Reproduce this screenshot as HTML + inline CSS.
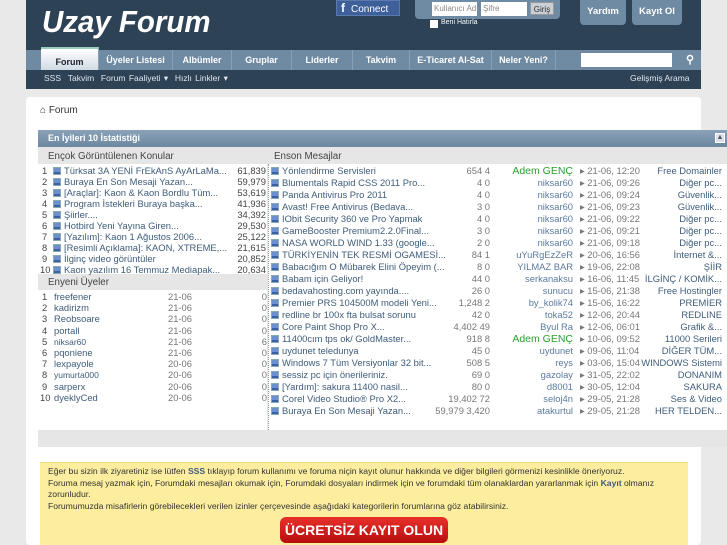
<!DOCTYPE html>
<html><head><meta charset="utf-8">
<style>
*{margin:0;padding:0;box-sizing:border-box}
body{width:727px;height:545px;overflow:hidden;background:#e9e9e9;font-family:"Liberation Sans",sans-serif;font-size:10px;color:#3e5c7a;position:relative}
.a{position:absolute;white-space:nowrap}
#hdr{position:absolute;left:26px;top:-5px;width:675px;height:94px;background:#2e4256;border-radius:4px}
.logo{position:absolute;left:42px;top:4px;font-size:31px;font-style:italic;font-weight:bold;color:#fff;transform:scaleX(0.95);transform-origin:left}
.tab{position:absolute;top:50px;height:20px;background:#6f8aa3;color:#fff;font-weight:bold;font-size:9px;text-align:center;line-height:20px;border-right:1px solid #8aa0b4}
.ic{display:inline-block;width:8px;height:8px;background:#6c8fd0;border:1px solid #8aa;vertical-align:-1px;margin-right:3px;box-shadow:inset 0 -2px #3b5fa8}
.m{position:relative;height:12px;line-height:12px;font-size:9.4px;white-space:nowrap}
.m span{position:absolute}
</style></head><body>
<div id="hdr"></div>
<div class="logo">Uzay Forum</div>
<div class="a" style="left:336px;top:0;width:64px;height:16px;background:#3d5f9a;border:1px solid #5a7ab0;color:#fff;font-size:10px;line-height:14px"><span style="font-weight:bold;font-size:12px;margin:0 6px 0 4px">f</span>Connect</div>
<div class="a" style="left:415px;top:-4px;width:145px;height:23px;background:#6f8aa3;border-radius:4px"></div>
<div class="a" style="left:432px;top:2px;width:45px;height:14px;background:#fff;color:#888;font-size:8px;line-height:14px;padding-left:2px">Kullanıcı Adı</div>
<div class="a" style="left:481px;top:2px;width:46px;height:14px;background:#fff;color:#888;font-size:8px;line-height:14px;padding-left:2px">Şifre</div>
<div class="a" style="left:530px;top:2px;width:24px;height:13px;background:#c9cfd4;color:#333;font-size:8px;line-height:13px;text-align:center;border:1px solid #999">Giriş</div>
<div class="a" style="left:430px;top:20px;width:8px;height:8px;background:#fff"></div>
<div class="a" style="left:441px;top:19px;color:#fff;font-size:7px">Beni Hatırla</div>
<div class="a" style="left:580px;top:-4px;width:46px;height:29px;background:#6f8aa3;border-radius:4px;color:#fff;font-weight:bold;font-size:9.5px;text-align:center;line-height:32px">Yardım</div>
<div class="a" style="left:632px;top:-4px;width:50px;height:29px;background:#6f8aa3;border-radius:4px;color:#fff;font-weight:bold;font-size:9.5px;text-align:center;line-height:32px">Kayıt Ol</div>
<div class="a" style="left:26px;top:50px;width:675px;height:20px;background:#6f8aa3"></div>
<div class="tab" style="left:41px;top:47px;height:23px;width:58px;background:linear-gradient(#fff,#d0dae3);color:#223;line-height:26px;border-top:2px solid #9cb">Forum</div>
<div class="tab" style="left:99px;width:74px">Üyeler Listesi</div>
<div class="tab" style="left:173px;width:59px">Albümler</div>
<div class="tab" style="left:232px;width:60px">Gruplar</div>
<div class="tab" style="left:292px;width:61px">Liderler</div>
<div class="tab" style="left:353px;width:57px">Takvim</div>
<div class="tab" style="left:410px;width:82px">E-Ticaret Al-Sat</div>
<div class="tab" style="left:492px;width:64px">Neler Yeni?</div>
<div class="a" style="left:581px;top:53px;width:91px;height:14px;background:#fff"></div>
<div class="a" style="left:686px;top:53px;color:#fff;font-weight:bold;font-size:11px">&#9906;</div>
<div class="a" style="left:26px;top:70px;width:675px;height:19px;background:#2e4256"></div>
<div class="a" style="left:44px;top:73px;color:#dfe6ee;font-size:8.5px;word-spacing:1px">SSS &nbsp;Takvim &nbsp;Forum Faaliyeti ▾ &nbsp;Hızlı Linkler ▾</div>
<div class="a" style="left:630px;top:73px;color:#dfe6ee;font-size:8.5px">Gelişmiş Arama</div>
<div class="a" style="left:26px;top:97px;width:675px;height:448px;background:#fff;border-radius:4px"></div>
<div class="a" style="left:40px;top:105px;color:#333;font-size:10px">&#8962; Forum</div>
<div class="a" style="left:38px;top:130px;width:689px;height:17px;background:linear-gradient(#8aa2b8,#6c879f);color:#fff;font-weight:bold;font-size:9px;line-height:17px;padding-left:10px">En İyileri 10 İstatistiği</div>
<div class="a" style="left:715px;top:133px;width:10px;height:10px;background:#dde;border:1px solid #fff;font-size:7px;line-height:8px;text-align:center;color:#456">▲</div>
<div class="a" style="left:38px;top:147px;width:689px;height:300px;background:#e6e6e6"></div>
<div class="a" style="left:38px;top:164px;width:229px;height:110px;background:#fff"></div>
<div class="a" style="left:38px;top:290px;width:229px;height:140px;background:#fff"></div>
<div class="a" style="left:268px;top:164px;width:459px;height:266px;background:#fff;border-left:1px dotted #999"></div>
<div class="a" style="left:48px;top:151px;color:#444;font-size:9.8px">Ençok Görüntülenen Konular</div>
<div class="a" style="left:274px;top:151px;color:#444;font-size:9.8px">Enson Mesajlar</div>
<div class="a" style="left:48px;top:277px;color:#444;font-size:9.8px">Enyeni Üyeler</div>

<div style="position:absolute;left:38px;top:165px;width:229px">
<div class="m" style="height:11px;line-height:11px"><span style="left:4px;color:#444">1</span><span style="left:15px"><i class="ic"></i>Türksat 3A YENİ FrEkAnS AyArLaMa...</span><span style="right:1px;color:#444;background:#fff">61,839</span></div>
<div class="m" style="height:11px;line-height:11px"><span style="left:4px;color:#444">2</span><span style="left:15px"><i class="ic"></i>Buraya En Son Mesaji Yazan...</span><span style="right:1px;color:#444">59,979</span></div>
<div class="m" style="height:11px;line-height:11px"><span style="left:4px;color:#444">3</span><span style="left:15px"><i class="ic"></i>[Araçlar]: Kaon &amp; Kaon Bordlu Tüm...</span><span style="right:1px;color:#444">53,619</span></div>
<div class="m" style="height:11px;line-height:11px"><span style="left:4px;color:#444">4</span><span style="left:15px"><i class="ic"></i>Program İstekleri Buraya başka...</span><span style="right:1px;color:#444">41,936</span></div>
<div class="m" style="height:11px;line-height:11px"><span style="left:4px;color:#444">5</span><span style="left:15px"><i class="ic"></i>Şiirler....</span><span style="right:1px;color:#444">34,392</span></div>
<div class="m" style="height:11px;line-height:11px"><span style="left:4px;color:#444">6</span><span style="left:15px"><i class="ic"></i>Hotbird Yeni Yayına Giren...</span><span style="right:1px;color:#444">29,530</span></div>
<div class="m" style="height:11px;line-height:11px"><span style="left:4px;color:#444">7</span><span style="left:15px"><i class="ic"></i>[Yazılım]: Kaon 1 Ağustos 2006...</span><span style="right:1px;color:#444">25,122</span></div>
<div class="m" style="height:11px;line-height:11px"><span style="left:4px;color:#444">8</span><span style="left:15px"><i class="ic"></i>[Resimli Açıklama]: KAON, XTREME,...</span><span style="right:1px;color:#444;background:#fff">21,615</span></div>
<div class="m" style="height:11px;line-height:11px"><span style="left:4px;color:#444">9</span><span style="left:15px"><i class="ic"></i>İlginç video görüntüler</span><span style="right:1px;color:#444">20,852</span></div>
<div class="m" style="height:11px;line-height:11px"><span style="left:2px;color:#444">10</span><span style="left:15px"><i class="ic"></i>Kaon yazılım 16 Temmuz Mediapak...</span><span style="right:1px;color:#444">20,634</span></div>
</div>

<div style="position:absolute;left:38px;top:291px;width:229px">
<div class="m" style="height:11.2px"><span style="left:4px;color:#444">1</span><span style="left:16px">freefener</span><span style="left:130px;color:#777">21-06</span><span style="right:0;color:#777">0</span></div>
<div class="m" style="height:11.2px"><span style="left:4px;color:#444">2</span><span style="left:16px">kadirizm</span><span style="left:130px;color:#777">21-06</span><span style="right:0;color:#777">0</span></div>
<div class="m" style="height:11.2px"><span style="left:4px;color:#444">3</span><span style="left:16px">Reobsoare</span><span style="left:130px;color:#777">21-06</span><span style="right:0;color:#777">0</span></div>
<div class="m" style="height:11.2px"><span style="left:4px;color:#444">4</span><span style="left:16px">portall</span><span style="left:130px;color:#777">21-06</span><span style="right:0;color:#777">0</span></div>
<div class="m" style="height:11.2px"><span style="left:4px;color:#444">5</span><span style="left:16px;font-size:8.5px">niksar60</span><span style="left:130px;color:#777">21-06</span><span style="right:0;color:#777">6</span></div>
<div class="m" style="height:11.2px"><span style="left:4px;color:#444">6</span><span style="left:16px">pqoniene</span><span style="left:130px;color:#777">21-06</span><span style="right:0;color:#777">0</span></div>
<div class="m" style="height:11.2px"><span style="left:4px;color:#444">7</span><span style="left:16px">lexpayole</span><span style="left:130px;color:#777">20-06</span><span style="right:0;color:#777">0</span></div>
<div class="m" style="height:11.2px"><span style="left:4px;color:#444">8</span><span style="left:16px;font-size:8.5px">yumurta000</span><span style="left:130px;color:#777">20-06</span><span style="right:0;color:#777">0</span></div>
<div class="m" style="height:11.2px"><span style="left:4px;color:#444">9</span><span style="left:16px">sarperx</span><span style="left:130px;color:#777">20-06</span><span style="right:0;color:#777">0</span></div>
<div class="m" style="height:11.2px"><span style="left:2px;color:#444">10</span><span style="left:16px">dyeklyCed</span><span style="left:130px;color:#777">20-06</span><span style="right:0;color:#777">0</span></div>
</div>

<style>
.t{left:2px}.c{right:237px;color:#777;text-align:right}.u{right:154px;text-align:right;color:#5b7aa0}.d{left:311px;color:#777}.f{right:5px;text-align:right}
.g{color:#2a9d2a!important;font-size:10.5px}
</style>
<div style="position:absolute;left:269px;top:165px;width:458px">
<div class="m"><span class="t"><i class="ic"></i>Yönlendirme Servisleri</span><span class="c">654 4</span><span class="u g">Adem GENÇ</span><span class="d">▸ 21-06, 12:20</span><span class="f">Free Domainler</span></div>
<div class="m"><span class="t"><i class="ic"></i>Blumentals Rapid CSS 2011 Pro...</span><span class="c">4 0</span><span class="u">niksar60</span><span class="d">▸ 21-06, 09:26</span><span class="f">Diğer pc...</span></div>
<div class="m"><span class="t"><i class="ic"></i>Panda Antivirus Pro 2011</span><span class="c">4 0</span><span class="u">niksar60</span><span class="d">▸ 21-06, 09:24</span><span class="f">Güvenlik...</span></div>
<div class="m"><span class="t"><i class="ic"></i>Avast! Free Antivirus (Bedava...</span><span class="c">3 0</span><span class="u">niksar60</span><span class="d">▸ 21-06, 09:23</span><span class="f">Güvenlik...</span></div>
<div class="m"><span class="t"><i class="ic"></i>IObit Security 360 ve Pro Yapmak</span><span class="c">4 0</span><span class="u">niksar60</span><span class="d">▸ 21-06, 09:22</span><span class="f">Diğer pc...</span></div>
<div class="m"><span class="t"><i class="ic"></i>GameBooster Premium2.2.0Final...</span><span class="c">3 0</span><span class="u">niksar60</span><span class="d">▸ 21-06, 09:21</span><span class="f">Diğer pc...</span></div>
<div class="m"><span class="t"><i class="ic"></i>NASA WORLD WIND 1.33 (google...</span><span class="c">2 0</span><span class="u">niksar60</span><span class="d">▸ 21-06, 09:18</span><span class="f">Diğer pc...</span></div>
<div class="m"><span class="t"><i class="ic"></i>TÜRKİYENİN TEK RESMİ OGAMESİ...</span><span class="c">84 1</span><span class="u">uYuRgEzZeR</span><span class="d">▸ 20-06, 16:56</span><span class="f">İnternet &amp;...</span></div>
<div class="m"><span class="t"><i class="ic"></i>Babacığım O Mübarek Elini Öpeyim (...</span><span class="c">8 0</span><span class="u">YILMAZ BAR</span><span class="d">▸ 19-06, 22:08</span><span class="f">ŞİİR</span></div>
<div class="m"><span class="t"><i class="ic"></i>Babam için Geliyor!</span><span class="c">44 0</span><span class="u">serkanaksu</span><span class="d">▸ 16-06, 11:45</span><span class="f">İLGİNÇ / KOMİK...</span></div>
<div class="m"><span class="t"><i class="ic"></i>bedavahosting.com yayında....</span><span class="c">26 0</span><span class="u">sunucu</span><span class="d">▸ 15-06, 21:38</span><span class="f">Free Hostingler</span></div>
<div class="m"><span class="t"><i class="ic"></i>Premier PRS 104500M modeli Yeni...</span><span class="c">1,248 2</span><span class="u">by_kolik74</span><span class="d">▸ 15-06, 16:22</span><span class="f">PREMİER</span></div>
<div class="m"><span class="t"><i class="ic"></i>redline br 100x fta bulsat sorunu</span><span class="c">42 0</span><span class="u">toka52</span><span class="d">▸ 12-06, 20:44</span><span class="f">REDLINE</span></div>
<div class="m"><span class="t"><i class="ic"></i>Core Paint Shop Pro X...</span><span class="c">4,402 49</span><span class="u">Byul Ra</span><span class="d">▸ 12-06, 06:01</span><span class="f">Grafik &amp;...</span></div>
<div class="m"><span class="t"><i class="ic"></i>11400cım tps ok/ GoldMaster...</span><span class="c">918 8</span><span class="u g">Adem GENÇ</span><span class="d">▸ 10-06, 09:52</span><span class="f">11000 Serileri</span></div>
<div class="m"><span class="t"><i class="ic"></i>uydunet teledunya</span><span class="c">45 0</span><span class="u">uydunet</span><span class="d">▸ 09-06, 11:04</span><span class="f">DİĞER TÜM...</span></div>
<div class="m"><span class="t"><i class="ic"></i>Windows 7 Tüm Versiyonlar 32 bit...</span><span class="c">508 5</span><span class="u">reys</span><span class="d">▸ 03-06, 15:04</span><span class="f">WINDOWS Sistemi</span></div>
<div class="m"><span class="t"><i class="ic"></i>sessiz pc için önerileriniz.</span><span class="c">69 0</span><span class="u">gazolay</span><span class="d">▸ 31-05, 22:02</span><span class="f">DONANIM</span></div>
<div class="m"><span class="t"><i class="ic"></i>[Yardım]: sakura 11400 nasil...</span><span class="c">80 0</span><span class="u">d8001</span><span class="d">▸ 30-05, 12:04</span><span class="f">SAKURA</span></div>
<div class="m"><span class="t"><i class="ic"></i>Corel Video Studio® Pro X2...</span><span class="c">19,402 72</span><span class="u">seloj4n</span><span class="d">▸ 29-05, 21:28</span><span class="f">Ses &amp; Video</span></div>
<div class="m"><span class="t"><i class="ic"></i>Buraya En Son Mesaji Yazan...</span><span class="c">59,979 3,420</span><span class="u">atakurtul</span><span class="d">▸ 29-05, 21:28</span><span class="f">HER TELDEN...</span></div>
</div>

<div style="position:absolute;left:40px;top:462px;width:648px;height:83px;background:#fcee9e;border-top:1px solid #eadb80"></div>
<div class="a" style="left:48px;top:466px;color:#333;font-size:8.6px;line-height:11.5px;white-space:normal;width:630px">Eğer bu sizin ilk ziyaretiniz ise lütfen <b style="color:#3e5c7a">SSS</b> tıklayıp forum kullanımı ve foruma niçin kayıt olunur hakkında ve diğer bilgileri görmenizi kesinlikle öneriyoruz.<br>Foruma mesaj yazmak için, Forumdaki mesajları okumak için, Forumdaki dosyaları indirmek için ve forumdaki tüm olanaklardan yararlanmak için <b style="color:#3e5c7a">Kayıt</b> olmanız zorunludur.<br>Forumumuzda misafirlerin görebilecekleri verilen izinler çerçevesinde aşağıdaki kategorilerin forumlarına göz atabilirsiniz.</div>
<div class="a" style="left:280px;top:517px;width:168px;height:26px;background:linear-gradient(#e8302a,#b80e0e);border-radius:6px;color:#fff;font-weight:bold;font-size:14px;text-align:center;line-height:26px">ÜCRETSİZ KAYIT OLUN</div>
</body></html>
